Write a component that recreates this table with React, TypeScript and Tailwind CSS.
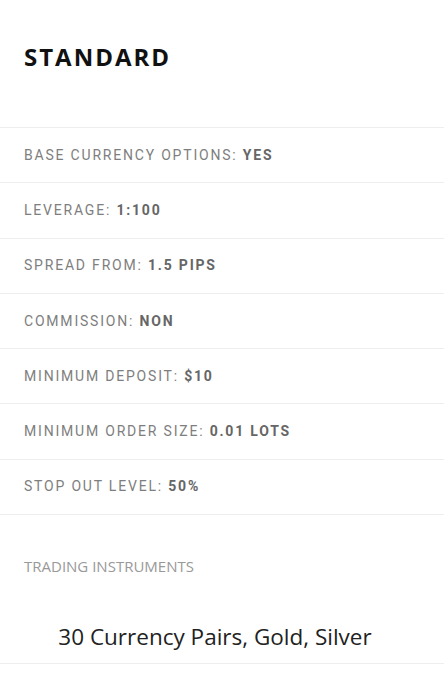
const specs = [
  { label: "BASE CURRENCY OPTIONS:", value: "YES" },
  { label: "LEVERAGE:", value: "1:100" },
  { label: "SPREAD FROM:", value: "1.5 PIPS" },
  { label: "COMMISSION:", value: "NON" },
  { label: "MINIMUM DEPOSIT:", value: "$10" },
  { label: "MINIMUM ORDER SIZE:", value: "0.01 LOTS" },
  { label: "STOP OUT LEVEL:", value: "50%" },
];

export default function App() {
  return (
    <div className="w-[444px] min-h-[673px] bg-white font-['Open_Sans',sans-serif]">
      <div className="h-[127px] px-6 pt-[41px]">
        <h2 className="text-[24px] leading-[32px] font-bold tracking-[2px] text-[#111]">STANDARD</h2>
      </div>

      {specs.map((s) => (
        <div
          key={s.label}
          className="flex h-[55.3px] items-center border-t border-[#eeeeee] px-6 font-['Roboto',sans-serif] text-[14px] tracking-[1.8px] text-[#7e7e7e]"
        >
          <span>
            {s.label} <span className="font-bold text-[#666]">{s.value}</span>
          </span>
        </div>
      ))}

      <div className="border-y border-[#eeeeee] px-6 pt-[41px] pb-[11px]">
        <div className="text-[15px] leading-5 text-[#999]">TRADING INSTRUMENTS</div>
        <div className="mt-[46px] pr-[14px] text-center text-[22.5px] leading-[30px] text-[#222]">
          30 Currency Pairs, Gold, Silver
        </div>
      </div>
    </div>
  );
}
